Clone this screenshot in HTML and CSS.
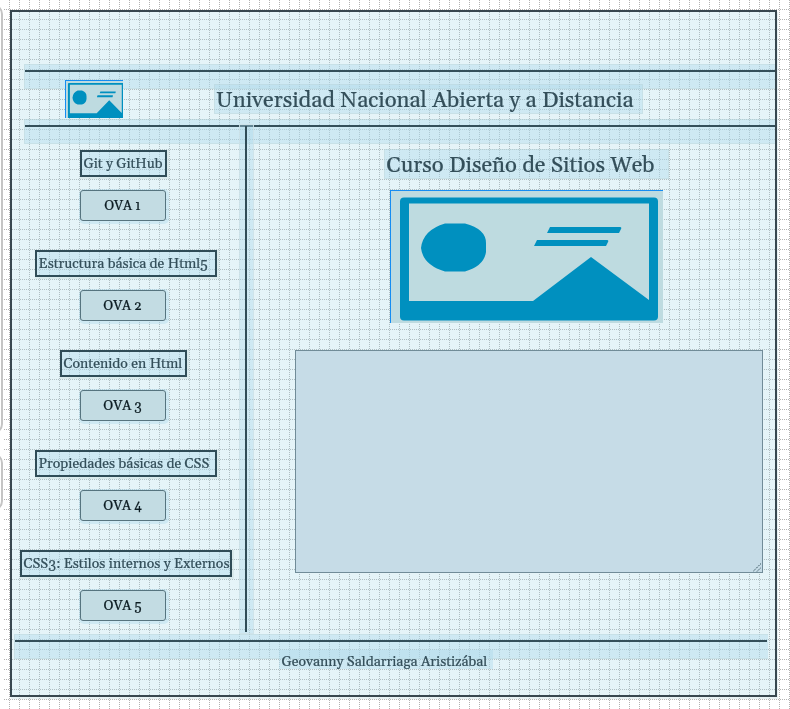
FILE: index.html
```
<!DOCTYPE html>
<html lang="es">
<head>
<meta charset="utf-8">
<title>Curso Diseño de Sitios Web</title>
<link rel="stylesheet" href="styles.css">
</head>
<body>
<svg class="grid" width="790" height="709" aria-hidden="true">
  <defs>
    <pattern id="dots" width="10" height="10" patternUnits="userSpaceOnUse">
      <path d="M9.5 0V10M0 9.5H10" stroke="#b2b2b2" stroke-dasharray="1 1" fill="none"/>
    </pattern>
    <symbol id="picture" viewBox="0 0 273 133" preserveAspectRatio="none">
      <path fill="#bedbe0" d="M0 0H273V133H0z"/>
      <rect x="9" y="6.500" width="258" height="123" rx="4" fill="#0090bf"/>
      <path fill="#bedbe0" d="M18 12.500H258V109L200 66L142 110H18z"/>
      <path fill="#0090bf" d="M54 32.500H74Q95 38 95 52V61Q93 75 74 80.500H54Q32 74 30 57Q32 39 54 32.500zM159 36H229Q231 36 230 38L228 42H156zM146 49H216Q218 49 217 51L215 55H143z"/>
    </symbol>
  </defs>
  <rect width="790" height="709" fill="url(#dots)"/>
</svg>
<div class="edge"><i class="tab tall"></i><i class="tab"></i></div>
<div class="frame">
  <div class="rule top"></div>
  <header class="header">
    <svg class="logo"><use href="#picture" width="59" height="39"/></svg>
    <h1 class="title"><span>Universidad Nacional Abierta y a Distancia</span></h1>
  </header>
  <div class="rule mid"></div>
  <div class="body">
    <nav class="menu">
      <h3 class="w1"><span>Git y GitHub</span></h3><button>OVA 1</button>
      <h3 class="w2"><span>Estructura básica de Html5</span></h3><button>OVA 2</button>
      <h3 class="w3"><span>Contenido en Html</span></h3><button>OVA 3</button>
      <h3 class="w4"><span>Propiedades básicas de CSS</span></h3><button>OVA 4</button>
      <h3 class="w5"><span>CSS3: Estilos internos y Externos</span></h3><button>OVA 5</button>
    </nav>
    <div class="divider"></div>
    <main class="content">
      <h2 class="title course"><span>Curso Diseño de Sitios Web</span></h2>
      <svg class="photo"><use href="#picture" width="273" height="133"/></svg>
      <div class="area"><svg width="9" height="9"><path d="M0 8.5L8 .5M4 8.5L8 4.5" stroke="#2f4c57" stroke-dasharray="1.5 1" fill="none"/></svg></div>
    </main>
  </div>
  <div class="rule low"></div>
  <footer class="footer"><span>Geovanny Saldarriaga Aristizábal</span></footer>
</div>
</body>
</html>
```
FILE: styles.css
```
* { box-sizing: border-box; margin: 0; }
body { width: 790px; height: 709px; overflow: hidden; background: #fff; color: #344f5a; font-family: Georgia, Gelasio, "Liberation Serif", serif; padding: 10px; -webkit-text-stroke: .2px; }
.grid { position: fixed; inset: 0; z-index: -2; }
.edge { position: fixed; top: 0; left: 0; width: 4px; height: 709px; background: #fff; overflow: hidden; z-index: -1; }
.tab { display: block; width: 30px; height: 58px; margin: 0 0 0 -27px; border: 2px solid #c4c4c4; border-radius: 10px; }
.tab.tall { height: 430px; margin: 4px 0 19px -27px; }
.frame { width: 767px; height: 687px; border: 2px solid #37474f; background: rgba(170, 217, 233, .3); padding-top: 52px; box-shadow: 1px 2px 1px rgba(190, 219, 224, .35); }
.rule { height: 25px; background: rgba(173, 217, 234, .4); border: 1px solid rgba(190, 209, 209, .35); border-right: 0; margin-left: 12px; }
.rule::before { content: ""; display: block; height: 2px; margin-top: 5px; background: #344f5a; }
.header { height: 30px; display: flex; }
.logo { width: 58px; height: 38px; margin: -9px 0 0 53px; border: solid #168df2; border-width: 1px 0 0 1px; flex: none; }
.title { height: 30px; width: 429px; margin: -5px 0 0 91px; padding-left: 1px; font-size: 22px; line-height: 32px; font-weight: 400; white-space: nowrap; background: rgba(173, 217, 234, .4); border: 1px solid rgba(190, 209, 209, .35); }
.body { height: 490px; display: flex; }
.menu { width: 227px; padding-top: 6px; display: flex; flex-direction: column; align-items: flex-start; }
.menu h3 { flex: none; height: 27px; border: 2px solid #2f4c57; background: rgba(173, 217, 234, .4); font-size: 14px; line-height: 25px; font-weight: 400; padding-left: 1.5px; margin-bottom: 13px; white-space: nowrap; box-shadow: 1px 1px 0 1px rgba(190, 209, 209, .3); }
.menu .w1 { width: 87px; margin-left: 68px; }
.menu .w2, .menu .w4 { width: 182px; margin-left: 23px; }
.menu .w3 { width: 127px; margin-left: 48px; }
.menu .w5 { width: 212px; margin-left: 8px; }
.menu button { flex: none; width: 86px; height: 31px; margin: 0 0 29px 68px; padding: 2px 1px 0 0; border: 1px solid #56747f; border-radius: 3px; background: #c3dce3; color: #0c1c22; font: 400 13.33px Georgia, Gelasio, "Liberation Serif", serif; -webkit-text-stroke: .2px; box-shadow: 1px 1px 0 2px rgba(173, 217, 234, .4); }
.divider { width: 15px; height: 510px; margin-top: -20px; background: rgba(173, 217, 234, .4); border: 1px solid rgba(208, 228, 232, .8); padding: 1px 0 1px 5px; }
.divider::before { content: ""; display: block; width: 2px; height: 100%; background: #2f4c57; }
.content { width: 521px; }
.course { width: 285px; margin: 5px 0 0 130px; padding-left: 1.5px; }
.photo { display: block; width: 273px; height: 133px; margin: 11px 0 27px 136px; border: solid #168df2; border-width: 1px 0 0 1px; }
.area { width: 468px; height: 223px; margin-left: 41px; border: 1px solid #718c98; background: #c6dce7; display: flex; justify-content: flex-end; align-items: flex-end; }
.low { width: 754px; margin-left: 2px; padding-right: 1px; }
.footer { width: 214px; height: 19px; margin: -9px 0 0 267px; padding-left: 2.5px; font-size: 14px; line-height: 24px; white-space: nowrap; background: rgba(173, 217, 234, .4); }
```
